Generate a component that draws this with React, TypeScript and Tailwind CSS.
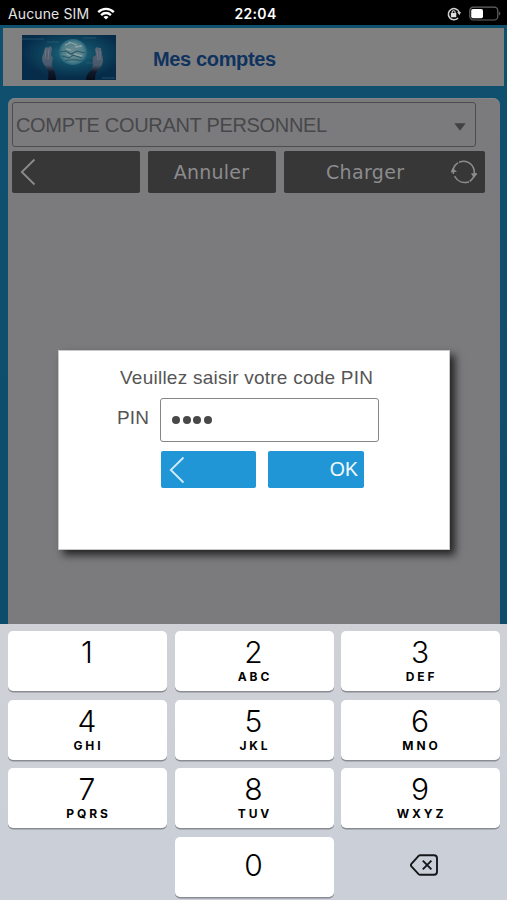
import clsx from "clsx"

interface Key {
  digit: string
  letters?: string
}

const KEY_ROWS: Key[][] = [
  [{ digit: "1", letters: "" }, { digit: "2", letters: "ABC" }, { digit: "3", letters: "DEF" }],
  [{ digit: "4", letters: "GHI" }, { digit: "5", letters: "JKL" }, { digit: "6", letters: "MNO" }],
  [{ digit: "7", letters: "PQRS" }, { digit: "8", letters: "TUV" }, { digit: "9", letters: "WXYZ" }],
]

function StatusBar() {
  return (
    <div className="grid h-[25px] grid-cols-3 items-center bg-black pt-[2px] font-['Inter',sans-serif] text-[14px] leading-none text-[#e4e4e4]">
      <div className="flex items-center gap-[8px] pl-[8px]">
        <span className="whitespace-nowrap tracking-[0.12px]">Aucune SIM</span>
        <svg className="mt-[-1px] h-[13px] w-[18px]" viewBox="0 0 18 13" fill="none" stroke="#fff" strokeWidth="2.3">
          <path d="M1.2 5.1C5.6.7 12.4.7 16.8 5.1" />
          <path d="M4.1 8.1C6.9 5.3 11.1 5.3 13.9 8.1" />
          <path d="M9 12.6 6.4 10c1.5-1.4 3.7-1.4 5.2 0z" fill="#fff" stroke="none" />
        </svg>
      </div>
      <span className="pl-[4px] text-center font-semibold tracking-[0.35px] text-white">22:04</span>
      <div className="flex items-center justify-end gap-[8px] pr-[6px]">
        <svg className="h-[14px] w-[14px]" viewBox="0 0 14 14" fill="none">
          <path d="M12.2 5.2A5.6 5.6 0 1 0 11.1 11" stroke="#d0d0d0" strokeWidth="1.5" />
          <path d="M10.2 5h3.8l-1.6 3.2z" fill="#d0d0d0" />
          <rect x="3.9" y="6" width="5.4" height="4.3" rx=".6" fill="#e0e0e0" />
          <path d="M5.1 6.5V5.2a1.5 1.5 0 0 1 3 0v1.3" stroke="#e0e0e0" strokeWidth="1.1" />
        </svg>
        <svg className="h-[15px] w-[32px]" viewBox="0 0 32 15" fill="none">
          <rect x=".8" y="1.2" width="28" height="12.8" rx="3.6" stroke="#666" strokeWidth="1.2" />
          <rect x="2.2" y="2.9" width="11.8" height="9.4" rx="1.8" fill="#fff" />
          <path d="M30.2 5.6c1.5.7 1.5 3.3 0 4z" fill="#666" />
        </svg>
      </div>
    </div>
  )
}

function Logo() {
  return (
    <svg className="h-[45px] w-[94px]" viewBox="0 0 94 45">
      <defs>
        <radialGradient id="glow" cx=".54" cy=".42" r=".55">
          <stop offset="0" stopColor="#2b7183" />
          <stop offset=".45" stopColor="#104b64" />
          <stop offset="1" stopColor="#062c49" />
        </radialGradient>
        <radialGradient id="globe">
          <stop offset="0" stopColor="#6b8b91" />
          <stop offset=".75" stopColor="#528089" />
          <stop offset="1" stopColor="#25667c" />
        </radialGradient>
        <linearGradient id="hand" x1="0" y1="0" x2="0" y2="1">
          <stop offset="0" stopColor="#576474" />
          <stop offset=".55" stopColor="#4a596c" />
          <stop offset=".75" stopColor="#101a2b" />
          <stop offset="1" stopColor="#070c18" />
        </linearGradient>
      </defs>
      <rect width="94" height="45" fill="url(#glow)" />
      <path d="M0 4h22M25 7h12M61 3h13M64 28h15M80 43h13" stroke="#386c83" strokeWidth=".7" opacity=".8" />
      <ellipse cx="51" cy="17" rx="14" ry="13" fill="url(#globe)" />
      <path d="M38 17l6-1 5 3 6-3 8 2M43 26c6-3 12 0 18-1M40 21l7 2 4-3 9 3" stroke="#28596a" strokeWidth="1.1" fill="none" />
      <path d="m43 10 5-2M53 12l7-1M44 14l5 1M52 19l8 2M47 7l8 3M44 19l5 2" stroke="#8ea3a6" strokeWidth="1.3" />
      <path d="M26 45c1-6 0-10-3-14-3-4-4-8-2-11l2-7 2-1 1 1 2-2 2 2-1 7 2 3-1 5c-1 4 4 7 4 17z" fill="url(#hand)" />
      <path d="M64 45c0-6 4-8 6-12 2-3 0-8 1-11l3-2-1-6 2-2 2 1 2 0 1 7c2 5 1 9-2 13-3 3-5 6-5 12z" fill="url(#hand)" />
      <path d="M24 14l-1 10M27 14l-1 11M75 15l1 10M78 16l0 9" stroke="#78808c" strokeWidth=".7" />
    </svg>
  )
}

function ChevronLeft({ className }: { className?: string }) {
  return (
    <svg className={clsx("h-[28px] w-[16px]", className)} viewBox="0 0 16 28" fill="none" stroke="currentColor" strokeWidth="1.8">
      <path d="M14.5 1.5 1.8 14l12.7 12.5" />
    </svg>
  )
}

function ReloadIcon() {
  return (
    <svg className="h-[26px] w-[26px]" viewBox="0 0 26 26" fill="none" stroke="#8c8c8c" strokeWidth="1.6" strokeLinecap="round">
      <path d="M6.6 4.2C3 6.6 1.6 10 2.4 14.2" />
      <path d="M8.6 3C14.4.8 21 3.8 23 10.4c.4 1.8.4 3 .1 4.4" />
      <path d="M3.9 17.7c3 5 8.2 7 13.4 5.2" />
      <path d="M19.2 22c1.9-1.2 3.1-3 3.8-5.2" />
      <path d="M.8 12.6 1.8 10.4 4 12.2zM21.4 15.2l1.8 2.2 2.2-2.6z" fill="#8c8c8c" />
    </svg>
  )
}

function AccountScreen() {
  return (
    <div className="flex h-[599px] flex-col bg-gradient-to-b from-[#10506f] to-[#0e4c6c] font-['Liberation_Sans',Arial,sans-serif]">
      <header className="mx-[3px] mt-[3px] flex h-[58px] shrink-0 items-center bg-[#808080] pl-[19px]">
        <Logo />
        <h1 className="ml-[37px] pt-[3px] text-[20px] font-bold leading-none tracking-[-0.36px] text-[#0f325e]">Mes comptes</h1>
      </header>
      <main className="ml-[8px] mr-[7px] mt-[12px] flex-1 rounded-t-[7px] bg-[#7b7b7d] pl-[4px] pt-[4px] shadow-[inset_0_1px_0_#858587]">
        <div className="flex h-[45px] w-[464px] items-center justify-between rounded-[3px] border border-[#4d4d50] pl-[3px] pr-[9px]">
          <span className="text-[20px] leading-none tracking-[-0.32px] text-[#47474a]">COMPTE COURANT PERSONNEL</span>
          <svg className="mt-[4px] h-[8px] w-[12px]" viewBox="0 0 12 8">
            <path d="M.3.3h11.4L6 7.7z" fill="#424244" />
          </svg>
        </div>
        <div className="mt-[4px] flex h-[42px] gap-[8px] font-['DejaVu_Sans',sans-serif] text-[19px] leading-none text-[#8c8c8e]">
          <button className="flex w-[128px] items-center rounded-[2px] bg-[#373737] pl-[8px]">
            <ChevronLeft />
          </button>
          <button className="w-[128px] rounded-[2px] bg-[#373737] pr-px pt-px tracking-[0.25px]">Annuler</button>
          <button className="flex w-[201px] items-center justify-between rounded-[2px] bg-[#373737] pl-[42px] pr-[8px]">
            <span className="pt-px tracking-[0.35px]">Charger</span>
            <ReloadIcon />
          </button>
        </div>
      </main>
    </div>
  )
}

function PinDialog() {
  return (
    <div className="absolute left-[58px] top-[350px] h-[200px] w-[392px] border border-[#c8c8c8] bg-white font-['Liberation_Sans',Arial,sans-serif] text-[#555] shadow-[5px_5px_8px_0px_rgba(0,0,0,0.72)]">
      <p className="pl-[61px] pt-[17px] text-[19px] leading-[20px] tracking-[0.24px]">Veuillez saisir votre code PIN</p>
      <div className="mt-[10px] flex h-[44px] pl-[58px]">
        <label className="w-[43px] pt-[10px] text-[19px] leading-[20px] tracking-[0.2px]">PIN</label>
        <div className="flex w-[219px] items-center gap-[2.5px] rounded-[3px] border border-[#858585] pl-[11px]">
          {[0, 1, 2, 3].map((i) => (
            <span key={i} className="h-[8px] w-[8px] rounded-full bg-[#484848]" />
          ))}
        </div>
      </div>
      <div className="mt-[9px] flex h-[37px] gap-[12px] pl-[102px]">
        <button className="flex w-[95px] items-center rounded-[2px] bg-[#2196d6] pl-[8px] text-[#d3ecf8]">
          <ChevronLeft />
        </button>
        <button className="w-[96px] rounded-[2px] bg-[#2196d6] pr-[6px] text-right text-[19.5px] leading-none text-[#f2fafe]">OK</button>
      </div>
    </div>
  )
}

function KeyButton({ digit, letters }: Key) {
  return (
    <button
      className={clsx(
        "flex h-[60px] flex-col items-center rounded-[5px] bg-white text-black shadow-[0_1.5px_0_#898c92]",
        letters === undefined ? "pt-[13px]" : "pt-[6px]"
      )}
    >
      <span className="pr-px text-[30px] font-[350] leading-[30px]">{digit}</span>
      {letters && <span className="mt-[4px] pl-[2px] text-[12px] font-bold leading-[12px] tracking-[2.9px]">{letters}</span>}
    </button>
  )
}

function Keypad() {
  return (
    <div className="grid h-[276px] auto-rows-[60px] grid-cols-3 gap-x-[7.5px] gap-y-[8.5px] bg-gradient-to-b from-[#cfd1d6] to-[#cacfd8] pl-[8px] pr-[7px] pt-[7px] font-['Inter',sans-serif]">
      {KEY_ROWS.flat().map((k) => (
        <KeyButton key={k.digit} {...k} />
      ))}
      <span />
      <KeyButton digit="0" />
      <button className="flex items-center justify-center">
        <svg className="mb-[3px] ml-[6px] h-[22px] w-[28px]" viewBox="0 0 28 22" fill="none" stroke="#15171a" strokeWidth="1.9" strokeLinejoin="round">
          <path d="M10.2 1.2H24a3 3 0 0 1 3 3v13.6a3 3 0 0 1-3 3H10.2q-.9 0-1.6-.7L1.4 12.3q-1-1.2 0-2.5l7.2-7.9q.7-.7 1.6-.7z" />
          <path d="m12.8 6.6 8.6 8.8M21.4 6.6 12.8 15.4" />
        </svg>
      </button>
    </div>
  )
}

export default function App() {
  return (
    <div className="relative h-[900px] w-[507px] overflow-hidden bg-black">
      <StatusBar />
      <AccountScreen />
      <PinDialog />
      <Keypad />
    </div>
  )
}
